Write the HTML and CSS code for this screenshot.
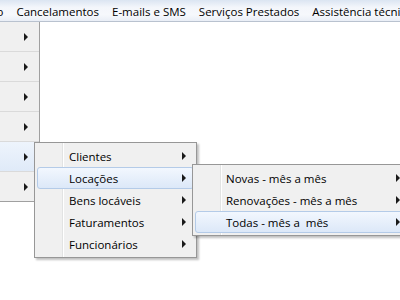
FILE: index.html
```html
<!DOCTYPE html>
<html>
<head>
    <title>Menu</title>
    <link rel="stylesheet" href="styles.css">
</head>
<body>
    <div class="menubar">
        <span class="bar-item cut">o</span>
        <span class="bar-item">Cancelamentos</span>
        <span class="bar-item">E-mails e SMS</span>
        <span class="bar-item">Serviços Prestados</span>
        <span class="bar-item">Assistência técnica</span>
    </div>

    <ul class="side">
        <li><span class="arrow"></span></li>
        <li><span class="arrow"></span></li>
        <li><span class="arrow"></span></li>
        <li><span class="arrow"></span></li>
        <li class="active"><span class="arrow"></span></li>
        <li><span class="arrow"></span></li>
    </ul>

    <ul class="popup reports">
        <li><span class="label">Clientes</span><span class="arrow"></span></li>
        <li class="active"><span class="label">Locações</span><span class="arrow"></span></li>
        <li><span class="label">Bens locáveis</span><span class="arrow"></span></li>
        <li><span class="label">Faturamentos</span><span class="arrow"></span></li>
        <li><span class="label">Funcionários</span><span class="arrow"></span></li>
    </ul>

    <ul class="popup rentals">
        <li><span class="label">Novas - mês a mês</span><span class="arrow"></span></li>
        <li><span class="label">Renovações - mês a mês</span><span class="arrow"></span></li>
        <li class="active"><span class="label">Todas - mês a &nbsp;mês</span><span class="arrow"></span></li>
    </ul>
</body>
</html>
```

FILE: styles.css
```css
body {
    margin: 0;
    background: #fff;
    font-family: "Open Sans", "Noto Sans", sans-serif;
    font-size: 11.5px;
    color: #000;
    position: relative;
    height: 300px;
    overflow: hidden;
}

ul {
    list-style: none;
    margin: 0;
    padding: 0;
}

.menubar {
    display: flex;
    height: 20px;
    align-items: center;
    background: linear-gradient(#dbe5f2, #f3f6fb 35%, #f6f8fc 70%, #e9eef6);
    border-bottom: 1px solid #b9c2cf;
    white-space: nowrap;
    overflow: hidden;
    padding-top: 1px;
}

.bar-item {
    padding: 0 6.5px;
}

.bar-item.cut {
    margin-left: -10px;
    padding-right: 6.5px;
}

.side {
    width: 39px;
    background: #f0f0f0;
    border-right: 1px solid #a0a0a0;
    border-bottom: 1px solid #a0a0a0;
}

.side li {
    height: 29px;
    border-bottom: 1px solid #dadada;
    display: flex;
    align-items: center;
    justify-content: flex-end;
    padding-right: 11px;
}

.side li:last-child {
    border-bottom: none;
}

.side li.active {
    background: linear-gradient(#eef4fc, #dfeaf8);
}

.arrow {
    width: 0;
    height: 0;
    border-top: 4px solid transparent;
    border-bottom: 4px solid transparent;
    border-left: 4px solid #1a1a1a;
}

.popup {
    position: absolute;
    background: #f0f0f0;
    border: 1px solid #979797;
    padding: 2px;
    box-shadow: 2px 2px 2px rgba(0, 0, 0, 0.25);
    background-image: linear-gradient(to right, transparent 27px, #e2e3e3 27px, #e2e3e3 28px, #fff 28px, #fff 29px, transparent 29px);
}

.popup li {
    height: 22px;
    display: flex;
    align-items: center;
    padding-left: 31px;
    padding-right: 7px;
    border: 1px solid transparent;
    border-radius: 3px;
    box-sizing: border-box;
}

.popup li .label {
    flex: 1;
    white-space: nowrap;
}

.popup li.active {
    background: linear-gradient(#f2f7fe, #dce8f8);
    border-color: #b4cbe8;
}

.reports {
    left: 34px;
    top: 142px;
    width: 157px;
}

.rentals {
    left: 192px;
    top: 164px;
    width: 212px;
}

.rentals li {
    padding-left: 30px;
    padding-right: 6px;
}
```
